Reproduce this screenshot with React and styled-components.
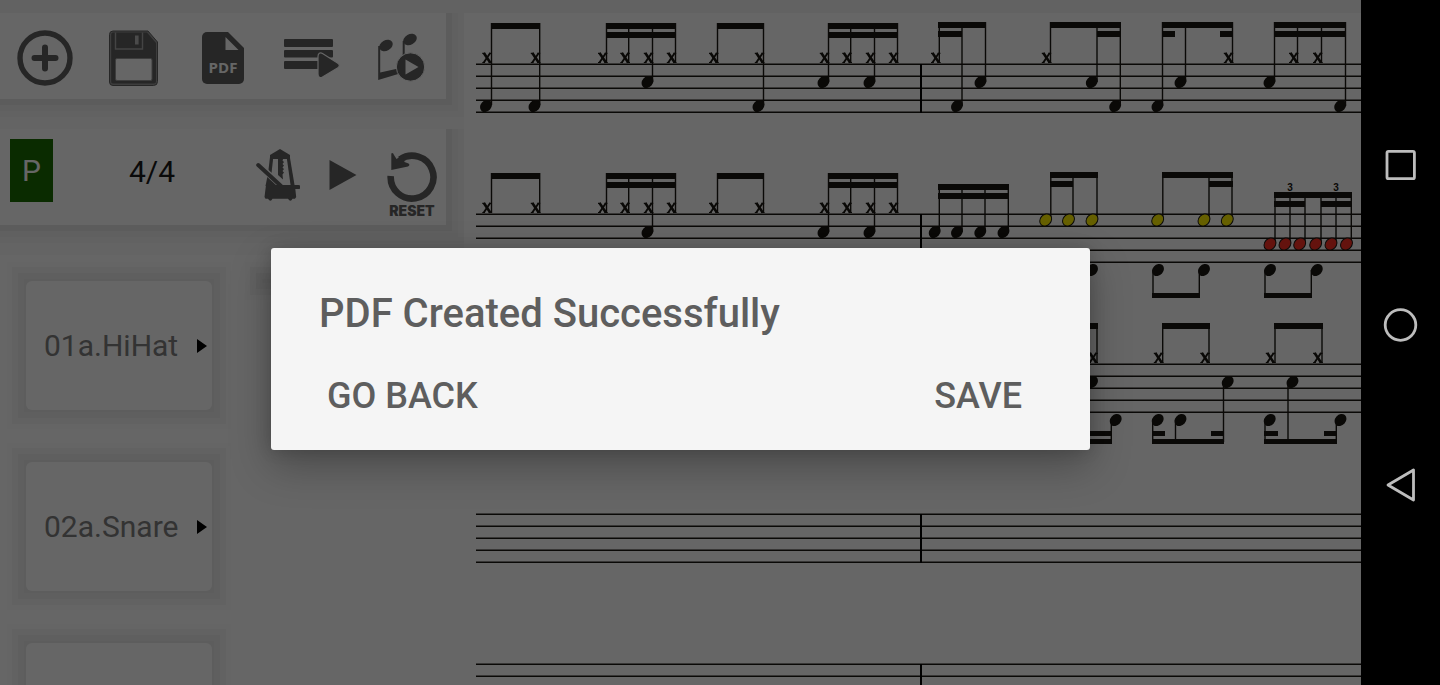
import React from "react";
import styled, { createGlobalStyle } from "styled-components";

const GlobalStyle = createGlobalStyle`
  *, *::before, *::after { box-sizing: border-box; }
  body { margin: 0; background: #000; font-family: Roboto, "Liberation Sans", sans-serif; }
  button { font: inherit; color: inherit; border: 0; padding: 0; background: none; cursor: pointer; }
  svg { display: block; }
`;

const Screen = styled.div`
  display: flex;
  height: 100vh;
  overflow: hidden;
`;

const Stage = styled.main`
  position: relative;
  flex: 1;
  min-width: 0;
  display: flex;
  flex-direction: column;
  overflow: hidden;
  background: #fff;
`;

const StatusStrip = styled.div`
  flex: none;
  height: 13px;
  background: #f5f5f5;
`;

const Workspace = styled.div`
  flex: 1;
  min-height: 0;
  display: flex;
`;

const Sidebar = styled.section`
  flex: none;
  width: 476px;
`;

const Panel = styled.div`
  display: flex;
  align-items: center;
  width: 446px;
  height: ${(p) => p.$height}px;
  margin-bottom: ${(p) => p.$gap}px;
  background: #fff;
  box-shadow: 0 0 0 6px #e6e6e6, 0 0 0 12px #efefef, 0 0 0 18px #f5f5f5, 0 0 0 30px #fafafa;
  clip-path: inset(0 -18px -30px 0);
`;

const ToolButton = styled.button`
  flex: 1;
  display: flex;
  justify-content: center;
  padding-top: 4px;
`;

const TransportPanel = styled(Panel)`
  padding: 0 8px 0 10px;
`;

const PatternButton = styled.button`
  width: 43px;
  height: 63px;
  margin-bottom: 14px;
  background: #196b00;
  color: #fff;
  font-size: 30px;
`;

const MeterButton = styled.button`
  width: 120px;
  margin: 0 0 12px 39px;
  color: #1a1a1a;
  font-size: 30px;
`;

const TransportGroup = styled.div`
  display: flex;
  align-items: center;
  gap: 29px;
  margin-left: auto;
`;

const TransportButton = styled.button`
  padding-bottom: 4px;
  color: #5f5f5f;
`;

const ResetButton = styled.button`
  display: flex;
  flex-direction: column;
  align-items: center;
  gap: 2px;
  padding-top: 16px;
  color: #5f5f5f;
`;

const ResetLabel = styled.span`
  font: 900 14px/14px Inter, "DejaVu Sans", sans-serif;
`;

const Library = styled.div`
  display: flex;
  gap: 52px;
  padding: 0 0 0 26px;
`;

const VoiceColumn = styled.div`
  display: flex;
  flex-direction: column;
  gap: 52px;
  width: 186px;
`;

const VoiceCard = styled.button`
  position: relative;
  z-index: 0;
  display: flex;
  align-items: center;
  justify-content: space-between;
  flex: none;
  height: ${(p) => (p.$empty ? 0 : 129)}px;
  padding: ${(p) => (p.$empty ? "0" : "0 5px 0 18px")};
  color: #808080;
  font-size: 30px;
  line-height: 36px;

  &::before {
    content: "";
    position: absolute;
    z-index: -1;
    inset: -2px;
    background: #e8e8e8;
    box-shadow: 0 0 0 6px #eeeeee, 0 0 0 12px #f4f4f4, 0 0 0 17px #fcfcfc;
  }

  &::after {
    content: "";
    position: absolute;
    z-index: -1;
    inset: 0;
    border-radius: 6px;
    background: #fff;
  }
`;

const Score = styled.section`
  flex: 1;
  min-width: 0;
  height: 672px;
  overflow: hidden;
`;

const System = styled.svg`
  width: 100%;
  height: 150px;
  overflow: visible;
  fill: #1a1712;
  stroke: none;
`;

const Tuplet = styled.text`
  font: 700 10px "Liberation Sans", sans-serif;
  text-anchor: middle;
`;

const Scrim = styled.div`
  position: absolute;
  z-index: 1;
  inset: 0;
  display: flex;
  align-items: center;
  justify-content: center;
  padding-top: 13px;
  background: rgba(0, 0, 0, 0.6);
`;

const Dialog = styled.div`
  display: flex;
  flex-direction: column;
  width: 819px;
  max-width: 100%;
  height: 202px;
  padding: 42px 60px 0 48px;
  border-radius: 3px;
  background: #f5f5f5;
  color: #5e5e5e;
  box-shadow: 0 16px 40px rgba(0, 0, 0, 0.28), 0 0 16px rgba(0, 0, 0, 0.16);
`;

const DialogTitle = styled.h1`
  margin: 0 0 34px;
  font-size: 40px;
  line-height: 48px;
  font-weight: 500;
`;

const DialogActions = styled.div`
  display: flex;
  justify-content: space-between;
`;

const DialogButton = styled.button`
  padding: 0 8px;
  font-size: 36px;
  line-height: 48px;
  font-weight: 500;
`;

const NavBar = styled.nav`
  flex: none;
  display: flex;
  flex-direction: column;
  align-items: center;
  justify-content: center;
  gap: 120px;
  width: 79px;
  padding-bottom: 35px;
  background: #000;
`;

const NavButton = styled.button`
  width: 40px;
  height: 40px;
`;

const PdfText = styled.text`
  font: 700 15px "Open Sans", sans-serif;
  text-anchor: middle;
`;

const INK = "#5f5f5f";

const AddIcon = () => (
  <svg width="56" height="56" viewBox="0 0 56 56" fill="none" stroke={INK}>
    <circle cx="28" cy="28" r="25" strokeWidth="5.4" />
    <path d="M28 17.5v21M17.5 28h21" strokeWidth="6" strokeLinecap="round" />
  </svg>
);

const SaveIcon = () => (
  <svg width="50" height="56" viewBox="0 0 50 56">
    <path d="M4 1h35l9.500 11v39.500a4 4 0 0 1-4 4H4a3.500 3.500 0 0 1-3.500-3.500V4.500A3.500 3.500 0 0 1 4 1z" fill="#999" stroke={INK} strokeWidth="1" />
    <path d="M4 2.500h34l9 10.500v38.500a2 2 0 0 1-2 2H4a1.800 1.800 0 0 1-1.800-2V4.500a2 2 0 0 1 1.800-2z" fill={INK} />
    <path d="M6.500 2.500v16.500h27v-16.500" fill="none" stroke="#aaa" strokeWidth="1.400" />
    <rect x="26" y="5.500" width="3.600" height="9" fill="#bbb" />
    <rect x="6.500" y="28.500" width="36.500" height="22" rx="1.500" fill="#fff" stroke="#999" />
  </svg>
);

const PdfIcon = () => (
  <svg width="42" height="52" viewBox="0 0 42 52">
    <path d="M5 0h21l16 16v31a5 5 0 0 1-5 5H5a5 5 0 0 1-5-5V5a5 5 0 0 1 5-5z" fill={INK} />
    <path d="M23.500 5v13h13z" fill="#fff" />
    <PdfText x="21" y="41" fill="#fff">PDF</PdfText>
  </svg>
);

const PlaylistIcon = () => (
  <svg width="56" height="40" viewBox="0 0 56 40" fill={INK}>
    <rect x="0" y="1" width="49" height="8" rx="1" />
    <rect x="0" y="12" width="49" height="7.500" rx="1" />
    <rect x="0" y="23" width="36" height="8" rx="1" />
    <path d="M34 18.500c0-3 2-4.500 4.500-3l15 9.500c2.500 1.600 2.500 3.400 0 5l-15 9c-2.500 1.500-4.500 0-4.500-3z" stroke="#fff" strokeWidth="1.200" />
  </svg>
);

const SongIcon = () => (
  <svg width="48" height="50" viewBox="0 0 48 50" fill={INK}>
    <ellipse cx="9" cy="12.500" rx="7.200" ry="5.200" transform="rotate(-30 9 12.500)" />
    <ellipse cx="33" cy="6.500" rx="7.200" ry="5.200" transform="rotate(-30 33 6.500)" />
    <path d="M1.200 13h2v26.500l18-4v5.500L1.200 47zM25.700 8h2v16h-2z" />
    <circle cx="33.500" cy="34" r="14.200" stroke="#fff" strokeWidth="1" />
    <path d="M28.500 26.500v15l13-7.500z" fill="#fff" />
  </svg>
);

const MetronomeIcon = () => (
  <svg width="44" height="53" viewBox="0 0 44 53" fill={INK}>
    <path d="M24 0l10 6v4H14V6z" />
    <path d="M14 8h3.300L15.200 27 12 25z" />
    <path d="M11.300 28l9.700 9H9.500z" />
    <path d="M30.800 9H34l4.700 28h-4z" />
    <path d="M22 9h5.500l-1 2.500 1.500 1.500-1.500 2 1.500 1.500-1.500 2 1.500 1.500-1.500 2 1.500 1.500-1.500 2 .500 5-5-4.500z" />
    <path d="M4 14.500l24 22" stroke="#fff" strokeWidth="2" />
    <path d="M2.200 16L25 37" stroke={INK} strokeWidth="4" strokeLinecap="round" />
    <path d="M10 36h32.500a2 2 0 0 1 0 4H39.300l.900 8-1.200 1.700H36.500q-2 4-4.500 0H16.500q-2 4-4.500 0H9.500L8.500 48z" />
  </svg>
);

const PlayIcon = () => (
  <svg width="28" height="32" viewBox="0 0 28 32" fill={INK}>
    <path d="M0.500 1v30L27.500 16z" />
  </svg>
);

const ResetIcon = () => (
  <svg width="52" height="50" viewBox="0 0 52 50">
    <path d="M4.700 24A21.400 21.400 0 1 0 14 7.500" fill="none" stroke={INK} strokeWidth="6.600" />
    <path d="M5.300 1.500Q7 .200 8 3l2.500 4L17 2.700 18.500 10l4 1.500q2 1.500-.500 3L5.300 18z" fill={INK} />
  </svg>
);

const ArrowIcon = () => (
  <svg width="10" height="14" viewBox="0 0 10 14">
    <path d="M0 0v14l10-7z" fill="#000" />
  </svg>
);

/*
 * Score data. Each x is in page pixels from the left edge of the workspace,
 * each y is relative to the top line of the staff.
 */
const SCORE_LEFT = 476;
const KICK = 42;
const SNARE = 18;
const TOM = 6;
const FLOOR = 30;
const PEDAL = 56;
const X_END = -1;

const group = (beams, stems, crosses = [], heads = []) => ({ beams, stems, crosses, heads });

const leftBar = (withKick) => {
  const low = withKick ? KICK - 1 : X_END;
  const kick = (...xs) => (withKick ? xs.map((x) => [x, KICK]) : []);
  return [
    group([[491, 540, -41]], [[491.5, -41, low], [539.7, -41, low]], [487, 535.500], kick(486, 534.500)),
    group(
      [[606, 676, -41], [606, 676, -32]],
      [[606.5, -41, X_END], [628.7, -41, X_END], [652.5, -41, SNARE], [675.5, -41, X_END]],
      [602.700, 625, 648.500, 671.500],
      [[647.5, SNARE]]
    ),
    group([[717, 764, -41]], [[717.5, -41, X_END], [763.5, -41, low]], [713.700, 759.500], kick(758.500)),
    group(
      [[828, 898, -41], [828, 898, -32]],
      [[828.5, -41, SNARE], [850.7, -41, X_END], [874.5, -41, SNARE], [897.5, -41, X_END]],
      [824.500, 847, 870.500, 893.500],
      [[823.5, SNARE], [869.5, SNARE]]
    ),
  ];
};

const firstSystem = [
  ...leftBar(true),
  group([[938, 986, -42], [938, 962, -33]], [[939.3, -42, X_END], [962, -42, KICK], [985.5, -42, SNARE]], [935.700], [[957, KICK], [980.5, SNARE]]),
  group([[1050, 1121, -42], [1097, 1121, -33]], [[1050.5, -42, X_END], [1097, -42, SNARE], [1120.3, -42, KICK]], [1046.500], [[1091.8, SNARE], [1115.2, KICK]]),
  group([[1162, 1233, -42], [1162, 1175, -33], [1220, 1233, -33]], [[1162.5, -42, KICK], [1185.5, -42, SNARE], [1232.5, -42, X_END]], [1228.500], [[1157.5, KICK], [1180.5, SNARE]]),
  group([[1274, 1346, -42], [1274, 1346, -33]], [[1274.5, -42, SNARE], [1297.5, -42, X_END], [1321.5, -42, X_END], [1345.5, -42, KICK]], [1293.700, 1317.700], [[1269.5, SNARE], [1340.2, KICK]]),
];

const YELLOW = "#fff000";
const RED = "#fa3024";

const secondSystem = [
  ...leftBar(false),
  group([[938, 1009, -30], [938, 1009, -21]], [939.300, 962, 985, 1008.300].map((x) => [x, -30, SNARE]), [], [934.700, 957, 980.300, 1003.500].map((x) => [x, SNARE])),
  group([[1050, 1098, -42], [1050, 1073, -33]], [1050.800, 1073, 1097].map((x) => [x, -42, TOM]), [], [1045.700, 1068.500, 1092].map((x) => [x, TOM, YELLOW])),
  group([[1162, 1233, -42], [1209, 1233, -33]], [1162.800, 1209, 1232].map((x) => [x, -42, TOM]), [], [1157.700, 1204, 1227.300].map((x) => [x, TOM, YELLOW])),
  group([[1274, 1352, -22], [1274, 1305, -13], [1321, 1352, -13]], [1275, 1290, 1305, 1321, 1336, 1351.300].map((x) => [x, -22, FLOOR]), [], [1270, 1285, 1299.700, 1315.700, 1331, 1346.500].map((x) => [x, FLOOR, RED])),
  group([[1040, 1088, 79]], [], [], [[1092, PEDAL]]),
  group([[1152, 1200, 79]], [[1153, PEDAL, 80], [1199.3, PEDAL, 80]], [], [[1158, PEDAL], [1204, PEDAL]]),
  group([[1264, 1312, 79]], [[1265, PEDAL, 80], [1311.3, PEDAL, 80]], [], [[1270, PEDAL], [1316.8, PEDAL]]),
];

const thirdSystem = [
  group([[1050, 1098, -41]], [[1097, -41, X_END]], [1093], [[1092, SNARE]]),
  group([[1040, 1112, 75], [1088, 1112, 67]], [[1111.3, PEDAL, 78]], [], [[1115.7, PEDAL]]),
  group([[1162, 1210, -41]], [[1162.7, -41, X_END], [1209, -41, X_END]], [1158.500, 1205]),
  group([[1152, 1224, 75], [1152, 1165, 67], [1211, 1224, 67]], [[1152.7, PEDAL, 78], [1175.5, PEDAL, 78], [1223.5, SNARE, 78]], [], [[1157.7, PEDAL], [1180.5, PEDAL], [1227.7, SNARE]]),
  group([[1274, 1323, -41]], [[1275, -41, X_END], [1322, -41, X_END]], [1270.500, 1317.800]),
  group([[1264, 1337, 75], [1264, 1278, 67], [1324, 1337, 67]], [[1265, PEDAL, 78], [1288, SNARE, 78], [1336.3, PEDAL, 78]], [], [[1269.7, PEDAL], [1292.5, SNARE], [1340.5, PEDAL]]),
];

const SYSTEMS = [
  { groups: firstSystem },
  { groups: secondSystem, tuplets: [1290, 1336] },
  { groups: thirdSystem },
  { groups: [] },
  { groups: [] },
];

const Cross = ({ x }) => (
  <g stroke="#1a1712" transform={`translate(${x} -6)`}>
    <path d="M-3.200 -5L3.200 4.500" strokeWidth="2.600" />
    <path d="M3.200 -5L-3.200 4.500" strokeWidth="1.900" />
    <path d="M-4.700 -4.700h3M2 -4.700h2.700M-4.700 4.500h2.700M1.700 4.500h3.300" strokeWidth="1.200" />
  </g>
);

const NoteHead = ({ x, y, color }) => (
  <ellipse
    cx={x}
    cy={y}
    rx="6.600"
    ry="5.400"
    transform={`rotate(-48 ${x} ${y})`}
    fill={color}
    stroke={color ? "#1a1712" : "none"}
    strokeWidth="1"
  />
);

function StaffSystem({ groups, tuplets = [] }) {
  return (
    <System aria-hidden="true">
      <g transform="translate(0 51)">
        {[0, 12, 24, 36, 48].map((y) => (
          <rect key={y} x="0" y={y - 0.5} width="100%" height="1.500" />
        ))}
      </g>
      <g transform={`translate(${-SCORE_LEFT} 51)`}>
        <rect x="920" y="0" width="2" height="49" fill="#000" />
        {groups.map((g, i) => (
          <g key={i}>
            {g.stems.map(([x, from, to]) => (
              <rect key={x} x={x - 0.7} y={from} width="1.400" height={to - from} />
            ))}
            {g.beams.map(([from, to, y]) => (
              <rect key={`${from}${y}`} x={from} y={y} width={to - from} height={y > 0 ? 5 : 6} />
            ))}
            {g.crosses.map((x) => (
              <Cross key={x} x={x} />
            ))}
            {g.heads.map(([x, y, color]) => (
              <NoteHead key={`${x}${y}`} x={x} y={y} color={color} />
            ))}
          </g>
        ))}
        {tuplets.map((x) => (
          <Tuplet key={x} x={x} y="-23">3</Tuplet>
        ))}
      </g>
    </System>
  );
}

const TOOLS = [
  ["Add", AddIcon],
  ["Save", SaveIcon],
  ["Export", PdfIcon],
  ["Playlist", PlaylistIcon],
  ["Play song", SongIcon],
];

const VOICES = ["01a.HiHat", "02a.Snare", ""];

export default function App() {
  return (
    <Screen>
      <GlobalStyle />
      <Stage>
        <StatusStrip />
        <Workspace>
          <Sidebar>
            <Panel $height={86} $gap={30}>
              {TOOLS.map(([label, Icon]) => (
                <ToolButton key={label} aria-label={label}>
                  <Icon />
                </ToolButton>
              ))}
            </Panel>
            <TransportPanel $height={96} $gap={56}>
              <PatternButton>P</PatternButton>
              <MeterButton>4/4</MeterButton>
              <TransportGroup>
                <TransportButton aria-label="Metronome"><MetronomeIcon /></TransportButton>
                <TransportButton aria-label="Play"><PlayIcon /></TransportButton>
                <ResetButton>
                  <ResetIcon />
                  <ResetLabel>RESET</ResetLabel>
                </ResetButton>
              </TransportGroup>
            </TransportPanel>
            <Library>
              <VoiceColumn>
                {VOICES.map((name, i) => (
                  <VoiceCard key={i} aria-label={name || undefined}>
                    {name}
                    {name && <ArrowIcon />}
                  </VoiceCard>
                ))}
              </VoiceColumn>
              <VoiceColumn>
                <VoiceCard $empty />
              </VoiceColumn>
            </Library>
          </Sidebar>
          <Score aria-label="Score">
            {SYSTEMS.map((system, i) => (
              <StaffSystem key={i} {...system} />
            ))}
          </Score>
        </Workspace>
        <Scrim>
          <Dialog role="dialog" aria-modal="true" aria-labelledby="dialog-title">
            <DialogTitle id="dialog-title">PDF Created Successfully</DialogTitle>
            <DialogActions>
              <DialogButton>GO BACK</DialogButton>
              <DialogButton>SAVE</DialogButton>
            </DialogActions>
          </Dialog>
        </Scrim>
      </Stage>
      <NavBar aria-label="System navigation">
        <NavButton aria-label="Recent apps">
          <svg width="40" height="40" fill="none" stroke="#bdbdbd" strokeWidth="2.800">
            <rect x="6" y="6.300" width="27.400" height="27.400" rx="1.500" />
          </svg>
        </NavButton>
        <NavButton aria-label="Home">
          <svg width="40" height="40" fill="none" stroke="#bdbdbd" strokeWidth="2.800">
            <circle cx="19.500" cy="20" r="15.300" />
          </svg>
        </NavButton>
        <NavButton aria-label="Back">
          <svg width="40" height="40" fill="none" stroke="#bdbdbd" strokeWidth="2.800" strokeLinejoin="round">
            <path d="M32.500 5v30L7 20z" />
          </svg>
        </NavButton>
      </NavBar>
    </Screen>
  );
}
